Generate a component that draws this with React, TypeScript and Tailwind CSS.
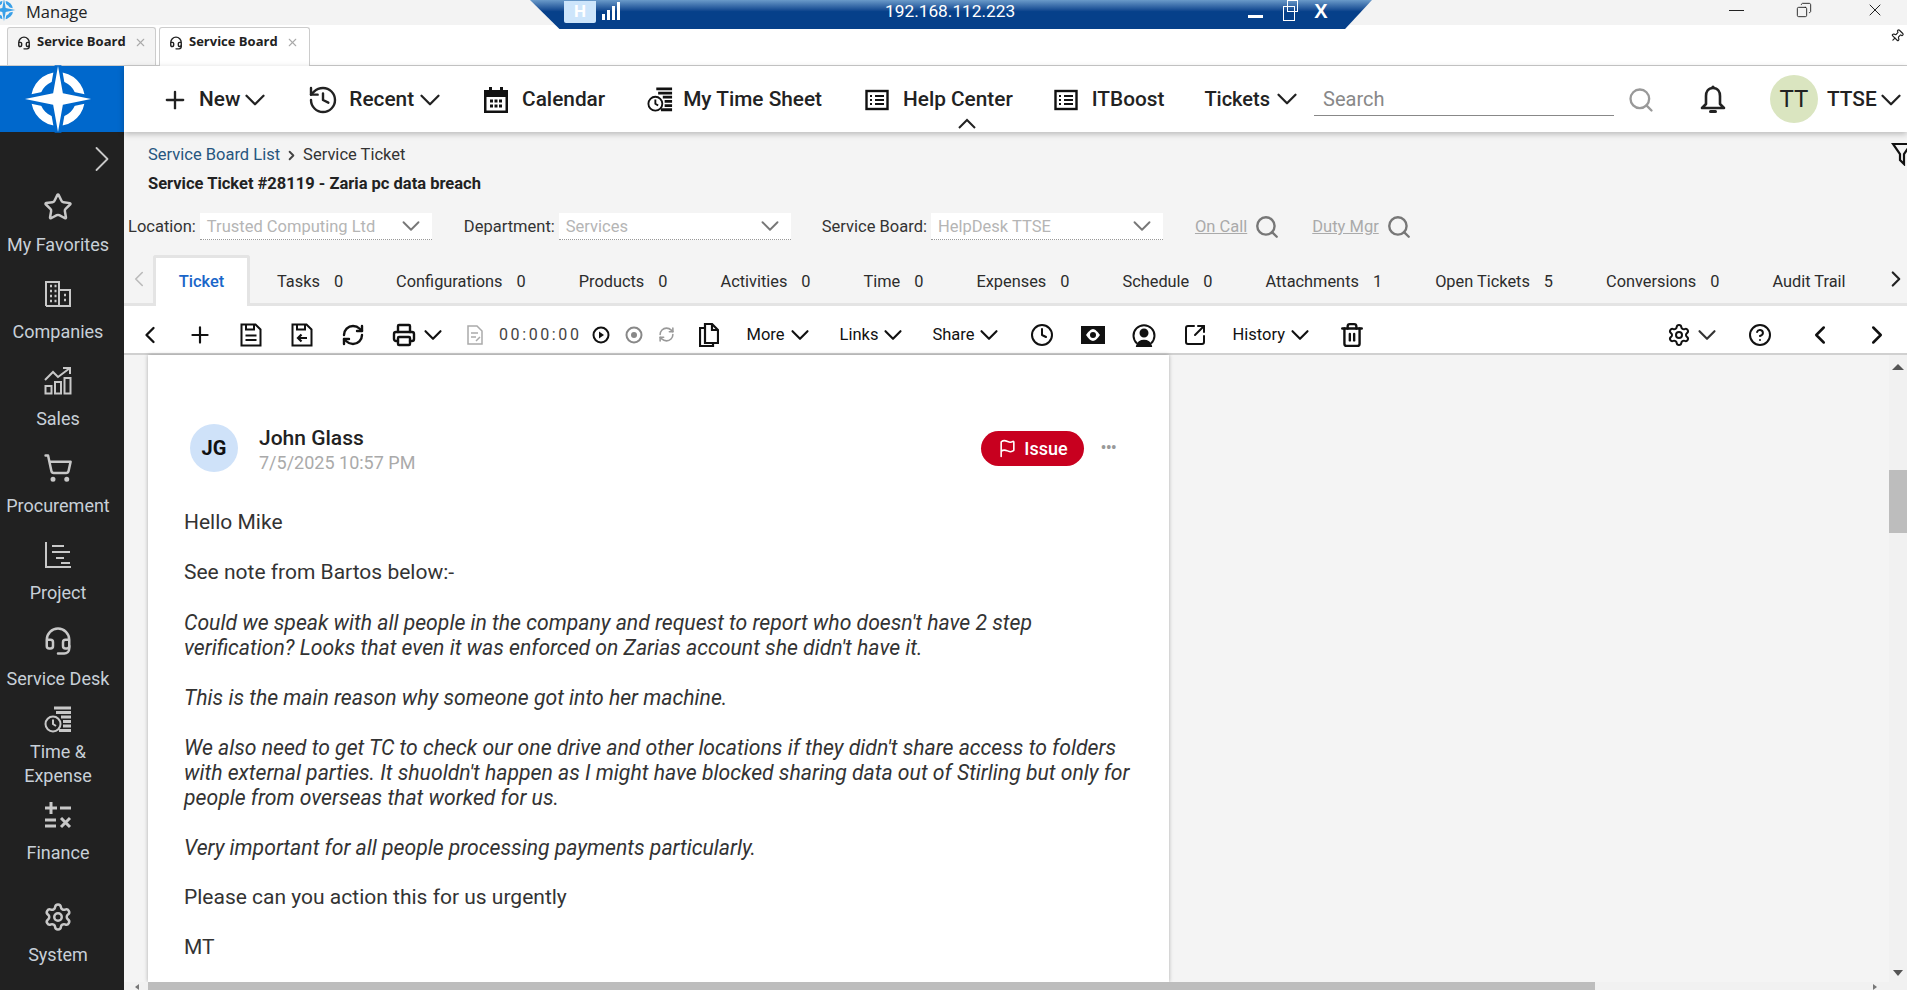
import {
  ChevronDown,
  ChevronLeft,
  ChevronRight,
  CircleHelp,
  Clock,
  Copy,
  Flag,
  Headset,
  History,
  Pin,
  Plus,
  Printer,
  RefreshCw,
  Search,
  Settings,
  ShoppingCart,
  SquareArrowOutUpRight,
  Star,
  Trash2,
  X,
} from "lucide-react";
import { ReactNode } from "react";

function Logo({ size, bg, fg }: { size: number; bg: string; fg: string }) {
  const star = "M0,-34 L5,-6 L34,0 L5,6 L0,34 L-5,6 L-34,0 L-5,-6 Z";
  return (
    <svg width={size} height={size} viewBox="-36 -36 72 72">
      <circle r="23" fill="none" stroke={fg} strokeWidth="9" />
      <path d={star} fill={fg} stroke={bg} strokeWidth="7" />
      <path d={star} fill={fg} />
    </svg>
  );
}

function CompaniesIcon() {
  return (
    <svg width="28" height="28" viewBox="0 0 28 28" fill="none" stroke="#c8c8c8" strokeWidth="2">
      <path d="M2 26V2h13v24M15 10h11v16H2" />
      <path d="M6 6h2M10.500 6h2M6 11h2M10.500 11h2M6 16h2M10.500 16h2M6 21h2M10.500 21h2M20 15h2M20 20h2" strokeWidth="2.500" />
    </svg>
  );
}

function SalesIcon() {
  return (
    <svg width="28" height="28" viewBox="0 0 28 28" fill="none" stroke="#c8c8c8" strokeWidth="2">
      <path d="M1 13 9 5l5 5L26 1M19 1h7v6" />
      <rect x="1.500" y="19" width="6" height="7.500" />
      <rect x="11" y="15" width="6" height="11.500" />
      <rect x="20.500" y="11" width="6" height="15.500" />
    </svg>
  );
}

function ProjectIcon() {
  return (
    <svg width="28" height="28" viewBox="0 0 28 28" fill="none" stroke="#c8c8c8" strokeWidth="2">
      <path d="M2 1v25h25M8 5h12M8 11h18M12 17h8M17 22h9" />
    </svg>
  );
}

function TimeSheetIcon({ color, size }: { color: string; size: number }) {
  return (
    <svg width={size} height={size} viewBox="0 0 28 28" fill="none" stroke={color}>
      <circle cx="9" cy="18" r="7.500" strokeWidth="2" />
      <path d="M9 13.500V18l3 2" strokeWidth="2" />
      <path d="M10 2h17M12 6.500h15M17 11h10M19 15.500h8M19 20h8M15 24.500h12" strokeWidth="3" />
    </svg>
  );
}

function FinanceIcon() {
  return (
    <svg width="28" height="28" viewBox="0 0 28 28" fill="none" stroke="#c8c8c8" strokeWidth="3">
      <path d="M7 1v12M1 7h12M16 7h11M1 19h11M1 25h11M17 17l9 9M26 17l-9 9" />
    </svg>
  );
}

function ListIcon() {
  return (
    <svg width="24" height="24" viewBox="0 0 24 24" fill="none" stroke="#111" strokeWidth="2.400">
      <rect x="1.500" y="3" width="21" height="18" />
      <path d="M5 8h2M10 8h9M5 12h2M10 12h9M5 16h2M10 16h9" strokeWidth="2" />
    </svg>
  );
}

function CalendarIcon() {
  return (
    <svg width="24" height="26" viewBox="0 0 24 26" fill="#111">
      <path fillRule="evenodd" d="M5 0h3v3h8V0h3v3h5v23H0V3h5zM2.500 10v13.500h19V10z" />
      <path d="M6 12.500h3v3H6zM10.500 12.500h3v3h-3zM15 12.500h3v3h-3zM6 17.500h3v3H6zM10.500 17.500h3v3h-3zM15 17.500h3v3h-3z" />
    </svg>
  );
}

function BellIcon() {
  return (
    <svg width="26" height="32" viewBox="0 0 26 32" fill="none" stroke="#222" strokeWidth="2.600">
      <path d="M13 4c-5 0-7 4-7 8v8l-4 4h22l-4-4v-8c0-4-2-8-7-8z" strokeLinejoin="round" />
      <circle cx="13" cy="3" r="1.600" fill="#222" stroke="none" />
      <path d="M10.500 27.500h5" strokeWidth="3" strokeLinecap="round" />
    </svg>
  );
}

function SaveIcon({ back }: { back?: boolean }) {
  return (
    <svg width="22" height="24" viewBox="0 0 22 24" fill="none" stroke="#111" strokeWidth="2">
      <path d="M1.500 1.500h14l5 5v16h-19z" />
      <path d="M6 1.500v5h8v-5" />
      {back ? (
        <path d="M16 15H7M10.500 11.500 7 15l3.500 3.500" strokeWidth="2.200" />
      ) : (
        <path d="M5.500 12.500h11M5.500 17h11" strokeWidth="2.200" />
      )}
    </svg>
  );
}

function NavItem({ icon, label }: { icon: ReactNode; label: string }) {
  return (
    <div className="flex h-[87px] flex-col items-center pr-[8px] text-[#c8d0d8]">
      <div className="flex h-[28px] items-center">{icon}</div>
      <div className="mt-[14px] text-[18px] leading-5">{label}</div>
    </div>
  );
}

function FilterSelect({ value }: { value: string }) {
  return (
    <div className="flex h-[27px] w-[232px] shrink-0 items-center justify-between border-b border-dotted border-[#999] bg-white pl-[7px] pr-[6px]">
      <span className="mt-[2px] text-[16.500px] text-[#b5b5b5]">{value}</span>
      <ChevronDown size={30} strokeWidth={1.500} className="text-[#777]" />
    </div>
  );
}

function Count({ name, n }: { name: string; n?: number }) {
  return (
    <div className="flex gap-[14px] text-[16.350px] text-[#2c2c2c]">
      <span>{name}</span>
      {n !== undefined && <span>{n}</span>}
    </div>
  );
}

function ToolText({ label, className }: { label: string; className: string }) {
  return (
    <div className={`flex shrink-0 items-center text-[16.500px] text-[#111] ${className}`}>
      <span className="mt-[2px]">{label}</span>
      <ChevronDown size={30} strokeWidth={1.700} />
    </div>
  );
}

const navIconClass = "text-[#c8c8c8]";

export default function App() {
  return (
    <div className="relative flex h-[990px] w-[1907px] flex-col overflow-hidden bg-[#f4f4f4] font-['Roboto',sans-serif] text-[#222]">
      {/* os title bar */}
      <div className="flex h-[25px] shrink-0 items-center bg-[#f3f3f3] pb-[5px]">
        <div className="-ml-[8px] w-[34px]">
          <Logo size={24} bg="#f3f3f3" fg="#3aa0e8" />
        </div>
        <span className="mt-[3px] font-['Open_Sans',sans-serif] text-[16.500px] leading-5 text-[#222]">Manage</span>
        <div className="ml-auto flex items-center text-[#222]">
          <div className="h-px w-[15px] bg-[#222]" />
          <Copy size={16} strokeWidth={1.400} className="ml-[52px] -scale-x-100" />
          <X size={20} strokeWidth={1.200} className="ml-[53px] mr-[22px]" />
        </div>
      </div>

      {/* remote desktop bar */}
      <div className="absolute left-[530px] top-0 flex h-[29px] w-[842px] items-center bg-gradient-to-b from-[#6a9ac9] via-[#06408a] via-40% to-[#06408a] [clip-path:polygon(0_0,100%_0,96.800%_100%,3.500%_100%)]">
        <div className="ml-[34px] flex h-[22px] w-[32px] -translate-y-[3px] items-center justify-center rounded-b-[2px] bg-[#cde5fb] text-[17px] font-bold leading-none text-white">
          H
        </div>
        <svg width="18" height="18" viewBox="0 0 18 18" className="ml-[6px] -translate-y-[4px]" fill="#fff">
          <rect x="0" y="12" width="3" height="6" />
          <rect x="5" y="8" width="3" height="10" />
          <rect x="10" y="4" width="3" height="14" />
          <rect x="15" y="0" width="3" height="18" />
        </svg>
        <span className="ml-[265px] -translate-y-[4px] text-[17.300px] leading-5 text-white">192.168.112.223</span>
        <div className="ml-[233px] h-[3px] w-[15px] translate-y-[2px] bg-white" />
        <div className="relative ml-[20px] h-[15px] w-[12px] -translate-y-[1px] border border-white">
          <div className="absolute left-[3px] top-[-7px] h-[12px] w-[11px] border border-white" />
        </div>
        <span className="ml-[19px] -translate-y-[4px] font-['Liberation_Sans',sans-serif] text-[20px] font-bold leading-none text-white">X</span>
      </div>

      {/* tab strip */}
      <div className="flex h-[41px] shrink-0 items-end gap-[3px] border-b border-[#ccc] bg-white pl-[7px] font-['Open_Sans',sans-serif]">
        <div className="flex h-[38px] w-[149px] items-start rounded-t-[3px] border border-b-0 border-[#ccc] bg-[#f4f4f4] pl-[9px] pt-[4px]">
          <Headset size={14} strokeWidth={2.400} className="mt-[4px]" />
          <span className="ml-[6px] text-[13px] font-bold">Service Board</span>
          <X size={13} className="ml-[8px] mt-[4px] text-[#aaa]" />
        </div>
        <div className="-mb-px flex h-[39px] w-[151px] items-start rounded-t-[3px] border border-b-0 border-[#ccc] bg-white pl-[9px] pt-[4px]">
          <Headset size={14} strokeWidth={2.400} className="mt-[4px]" />
          <span className="ml-[6px] text-[13px] font-bold">Service Board</span>
          <X size={13} className="ml-[8px] mt-[4px] text-[#aaa]" />
        </div>
        <Pin size={14} className="ml-auto mr-[3px] mb-[22px] rotate-45" />
      </div>

      <div className="flex min-h-0 flex-1">
        {/* sidebar */}
        <div className="flex w-[124px] shrink-0 flex-col bg-[#212121]">
          <div className="flex h-[66px] shrink-0 items-center justify-center bg-[#0068cc] pr-[8px]">
            <Logo size={70} bg="#0068cc" fg="#fff" />
          </div>
          <div className="flex h-[61px] shrink-0 items-center justify-end pb-[7px]">
            <ChevronRight size={44} strokeWidth={1} className="text-[#c8c8c8]" />
          </div>
          <NavItem icon={<Star size={30} strokeWidth={2} className={navIconClass} />} label="My Favorites" />
          <NavItem icon={<CompaniesIcon />} label="Companies" />
          <NavItem icon={<SalesIcon />} label="Sales" />
          <NavItem icon={<ShoppingCart size={30} strokeWidth={2} className={navIconClass} />} label="Procurement" />
          <NavItem icon={<ProjectIcon />} label="Project" />
          <NavItem icon={<Headset size={30} strokeWidth={2} className={navIconClass} />} label="Service Desk" />
          <div className="-mt-2 flex h-[95px] flex-col items-center pr-[8px] text-[#c8d0d8]">
            <TimeSheetIcon color="#c8c8c8" size={28} />
            <div className="mt-[6px] text-center text-[18px] leading-6">
              Time &amp;
              <br />
              Expense
            </div>
          </div>
          <NavItem icon={<FinanceIcon />} label="Finance" />
          <div className="mt-[15px]">
            <NavItem icon={<Settings size={30} strokeWidth={2} className={navIconClass} />} label="System" />
          </div>
        </div>

        <div className="flex min-w-0 flex-1 flex-col">
          {/* top nav */}
          <div className="relative z-10 flex h-[66px] shrink-0 items-center bg-white pt-[2px] text-[20.800px] font-medium text-[#222] shadow-[0_2px_6px_rgba(0,0,0,0.25)] [&>*]:shrink-0">
            <Plus size={28} strokeWidth={2} className="ml-[37px]" />
            <span className="ml-[10px]">New</span>
            <ChevronDown size={34} strokeWidth={1.600} className="-ml-[2px]" />
            <History size={32} strokeWidth={1.800} className="ml-[35px]" />
            <span className="ml-[10px]">Recent</span>
            <ChevronDown size={34} strokeWidth={1.600} className="-ml-[1px]" />
            <div className="ml-[37px]">
              <CalendarIcon />
            </div>
            <span className="ml-[14px]">Calendar</span>
            <div className="ml-[42px]">
              <TimeSheetIcon color="#111" size={26} />
            </div>
            <span className="ml-[10px]">My Time Sheet</span>
            <div className="ml-[43px]">
              <ListIcon />
            </div>
            <span className="ml-[14px]">Help Center</span>
            <div className="ml-[41px]">
              <ListIcon />
            </div>
            <span className="ml-[14px]">ITBoost</span>
            <span className="ml-[40px] -mt-[2px] text-[20px]">Tickets</span>
            <ChevronDown size={34} strokeWidth={1.600} className="-mt-[2px]" />
            <div className="ml-[10px] -mt-[2px] flex h-[34px] w-[300px] items-center border-b border-[#888] pl-[9px] text-[20px] font-normal text-[#888]">
              Search
            </div>
            <Search size={28} strokeWidth={2} className="ml-[13px] text-[#999]" />
            <div className="ml-[45px]">
              <BellIcon />
            </div>
            <div className="ml-[44px] -mt-[2px] flex h-[48px] w-[48px] items-center justify-center rounded-full bg-[#dae5c0] text-[24px] font-normal">
              TT
            </div>
            <span className="ml-[9px]">TTSE</span>
            <ChevronDown size={34} strokeWidth={1.600} className="-ml-[3px]" />
            <div className="absolute left-[834px] top-[52px] text-[#222]">
              <svg width="18" height="12" viewBox="0 0 18 12" fill="none" stroke="currentColor" strokeWidth="2">
                <path d="M1 10 9 2l8 8" />
              </svg>
            </div>
          </div>

          {/* breadcrumb + title */}
          <div className="relative h-[81px] shrink-0 pl-[24px] pt-[13px] text-[16.500px]">
            <div className="flex items-center leading-5">
              <span className="text-[#27567f]">Service Board List</span>
              <ChevronRight size={15} strokeWidth={3} className="mx-[4px] text-[#444]" />
              <span className="text-[#333]">Service Ticket</span>
            </div>
            <div className="mt-[9px] font-bold leading-5 text-[#222]">Service Ticket #28119 - Zaria pc data breach</div>
            <svg width="22" height="24" viewBox="0 0 22 24" className="absolute right-[-6px] top-[10px]" fill="none" stroke="#111" strokeWidth="2.200">
              <path d="M2 2h18l-7 10v10l-4-4v-6z" />
            </svg>
          </div>

          {/* filter row */}
          <div className="flex h-[27px] shrink-0 items-center text-[16.500px] text-[#333]">
            <span className="ml-[4px] mt-[2px]">Location:</span>
            <div className="ml-[4px]">
              <FilterSelect value="Trusted Computing Ltd" />
            </div>
            <span className="ml-[32px] mt-[2px]">Department:</span>
            <div className="ml-[4px]">
              <FilterSelect value="Services" />
            </div>
            <span className="ml-[31px] mt-[2px]">Service Board:</span>
            <div className="ml-[4px]">
              <FilterSelect value="HelpDesk TTSE" />
            </div>
            <span className="ml-[32px] mt-[2px] text-[#aaa] underline">On Call</span>
            <Search size={26} strokeWidth={2.200} className="ml-[7px] text-[#777]" />
            <span className="ml-[32px] mt-[2px] text-[#aaa] underline">Duty Mgr</span>
            <Search size={26} strokeWidth={2.200} className="ml-[7px] text-[#777]" />
          </div>

          {/* record tabs */}
          <div className="mt-[15px] flex h-[51px] shrink-0 items-center border-b-[3px] border-[#e4e4e4]">
            <ChevronLeft size={26} strokeWidth={1.500} className="ml-[2px] text-[#bbb]" />
            <div className="-mb-[3px] ml-[1px] flex h-[51px] w-[97px] items-center justify-center self-end rounded-t-[3px] border-[3px] border-b-0 border-[#e4e4e4] bg-white text-[16.500px] font-medium text-[#1a66c9]">
              Ticket
            </div>
            <div className="ml-[27px] flex gap-[53px] pt-[6px]">
              <Count name="Tasks" n={0} />
              <Count name="Configurations" n={0} />
              <Count name="Products" n={0} />
              <Count name="Activities" n={0} />
              <Count name="Time" n={0} />
              <Count name="Expenses" n={0} />
              <Count name="Schedule" n={0} />
              <Count name="Attachments" n={1} />
              <Count name="Open Tickets" n={5} />
              <Count name="Conversions" n={0} />
              <Count name="Audit Trail" />
            </div>
            <ChevronRight size={26} strokeWidth={2} className="ml-auto mr-[-2px] shrink-0 text-[#222]" />
          </div>

          {/* toolbar */}
          <div className="flex h-[49px] shrink-0 items-center border-b-2 border-[#d0d0d0] bg-white pt-[10px] text-[#111] [&>*]:shrink-0">
            <ChevronLeft size={28} strokeWidth={2} className="ml-[12px]" />
            <Plus size={26} strokeWidth={2} className="ml-[23px]" />
            <div className="ml-[27px]">
              <SaveIcon />
            </div>
            <div className="ml-[29px]">
              <SaveIcon back />
            </div>
            <RefreshCw size={24} strokeWidth={2.400} className="ml-[28px]" />
            <Printer size={24} strokeWidth={2.400} className="ml-[27px]" />
            <ChevronDown size={30} strokeWidth={1.700} className="ml-[2px]" />
            <svg width="16" height="20" viewBox="0 0 16 20" className="ml-[19px]" fill="none" stroke="#aaa" strokeWidth="1.500">
              <path d="M1 1h9l5 5v13H1zM4 8h7M4 12h5M9 16l4-4" />
            </svg>
            <span className="ml-[16px] text-[16px] tracking-[2.600px] text-[#444]">00:00:00</span>
            <svg width="18" height="18" viewBox="0 0 18 18" className="ml-[10px]" fill="none" stroke="#111" strokeWidth="2">
              <circle cx="9" cy="9" r="7.500" />
              <path d="M7 5.500v7l5-3.500z" fill="#111" stroke="none" />
            </svg>
            <svg width="18" height="18" viewBox="0 0 18 18" className="ml-[15px]" fill="none" stroke="#888" strokeWidth="2">
              <circle cx="9" cy="9" r="7.500" />
              <circle cx="9" cy="9" r="3" fill="#888" stroke="none" />
            </svg>
            <RefreshCw size={17} strokeWidth={2.200} className="ml-[15px] text-[#999]" />
            <svg width="20" height="24" viewBox="0 0 20 24" className="ml-[24px]" fill="none" stroke="#111" strokeWidth="2.200">
              <path d="M6 1h7l6 6v13H6zM6 5H1v18h13v-3M13 1v6h6" />
            </svg>
            <ToolText label="More" className="ml-[28px]" />
            <ToolText label="Links" className="ml-[25px]" />
            <ToolText label="Share" className="ml-[24px]" />
            <Clock size={24} strokeWidth={2} className="ml-[26px]" />
            <svg width="24" height="18" viewBox="0 0 24 18" className="ml-[27px]" fill="#111">
              <path fillRule="evenodd" d="M0 0h24v18H0zM12 3c-2 0-5 3-7 6 2 3 5 6 7 6s5-3 7-6c-2-3-5-6-7-6z" />
              <circle cx="12" cy="9" r="3" />
            </svg>
            <svg width="24" height="24" viewBox="0 0 24 24" className="ml-[27px]" fill="none" stroke="#111" strokeWidth="2">
              <path d="M5 20.500a10.500 10.500 0 1 1 14 0" />
              <circle cx="12" cy="10" r="3.500" fill="#111" />
              <path d="M5 23c1-7 13-7 14 0z" fill="#111" />
            </svg>
            <SquareArrowOutUpRight size={24} strokeWidth={2} className="ml-[27px]" />
            <ToolText label="History" className="ml-[25px]" />
            <Trash2 size={26} strokeWidth={2.200} className="ml-[24px]" />
            <Settings size={24} strokeWidth={2} className="ml-[302px]" />
            <ChevronDown size={30} strokeWidth={1.700} className="ml-[1px] text-[#333]" />
            <CircleHelp size={24} strokeWidth={2} className="ml-[26px]" />
            <ChevronLeft size={30} strokeWidth={2} className="ml-[33px]" />
            <ChevronRight size={30} strokeWidth={2} className="ml-[27px]" />
          </div>

          {/* body */}
          <div className="flex min-h-0 flex-1">
            <div className="ml-[24px] w-[1021px] shrink-0 overflow-hidden bg-white pl-[36px] pr-[30px] shadow-[0_0_4px_rgba(0,0,0,0.3)]">
              <div className="mt-[66px] flex items-center">
                <div className="ml-[6px] flex h-[48px] w-[48px] shrink-0 items-center justify-center rounded-full bg-[#cfe2f9] text-[20px] font-bold text-[#111]">
                  JG
                </div>
                <div className="ml-[21px] mt-[5px]">
                  <div className="text-[21px] font-medium leading-6 text-[#222]">John Glass</div>
                  <div className="mt-[1px] text-[18px] leading-6 text-[#aaa]">7/5/2025 10:57 PM</div>
                </div>
                <div className="ml-auto mr-[23px] flex items-center">
                  <div className="flex h-[35px] w-[103px] items-center justify-center rounded-full bg-[#c8001f] text-[18px] font-medium text-white">
                    <Flag size={19} strokeWidth={2} className="mr-[7px]" />
                    Issue
                  </div>
                  <div className="ml-[16px] text-[18px] leading-none tracking-tighter text-[#999]">•••</div>
                </div>
              </div>
              <div className="mt-[35px] text-[21px] leading-[25px] text-[#333]">
                <p>Hello Mike</p>
                <p className="mt-[25px]">See note from Bartos below:-</p>
                <div className="text-[21.200px] italic">
                  <p className="mt-[25px]">
                    Could we speak with all people in the company and request to report who doesn't have 2 step
                    <br />
                    verification? Looks that even it was enforced on Zarias account she didn't have it.
                  </p>
                  <p className="mt-[25px]">This is the main reason why someone got into her machine.</p>
                  <p className="mt-[25px]">
                    We also need to get TC to check our one drive and other locations if they didn't share access to folders
                    <br />
                    with external parties. It shuoldn't happen as I might have blocked sharing data out of Stirling but only for
                    <br />
                    people from overseas that worked for us.
                  </p>
                  <p className="mt-[25px]">Very important for all people processing payments particularly.</p>
                </div>
                <p className="mt-[25px]">Please can you action this for us urgently</p>
                <p className="mt-[25px]">MT</p>
              </div>
            </div>
            <div className="ml-auto flex w-[18px] shrink-0 flex-col items-center bg-[#f1f1f1]">
              <div className="mt-[9px] h-0 w-0 border-x-[6px] border-b-[6px] border-x-transparent border-b-[#555]" />
              <div className="mt-[100px] h-[63px] w-[18px] bg-[#bdbdbd]" />
              <div className="mt-auto mb-[6px] h-0 w-0 border-x-[5px] border-t-[6px] border-x-transparent border-t-[#555]" />
            </div>
          </div>

          {/* horizontal scroll */}
          <div className="flex h-[8px] shrink-0 items-end bg-[#f1f1f1]">
            <div className="ml-[11px] h-0 w-0 border-y-[3px] border-r-[4px] border-y-transparent border-r-[#777]" />
            <div className="ml-[9px] h-[8px] w-[1447px] bg-[#bdbdbd]" />
            <div className="ml-[278px] h-0 w-0 border-y-[3px] border-l-[4px] border-y-transparent border-l-[#777]" />
          </div>
        </div>
      </div>
    </div>
  );
}
